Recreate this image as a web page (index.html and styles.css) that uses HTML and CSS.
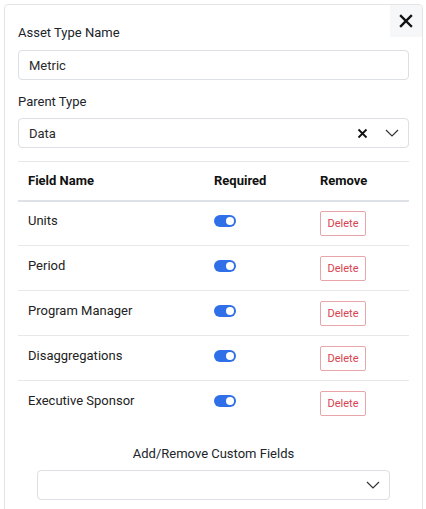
FILE: index.html
```html
<!DOCTYPE html>
<html>
<head>
<meta charset="utf-8">
<link rel="stylesheet" href="styles.css">
</head>
<body>
<div class="card">
  <button class="close" aria-label="Close">
    <svg width="14" height="14" viewBox="0 0 14 14"><path d="M2 2L12 12M12 2L2 12" stroke="#111" stroke-width="2.4" stroke-linecap="square"/></svg>
  </button>
  <div class="field">
    <label class="label">Asset Type Name</label>
    <div class="input">Metric</div>
  </div>
  <div class="field">
    <label class="label">Parent Type</label>
    <div class="input select">
      <span class="value">Data</span>
      <svg class="clear" width="11" height="11" viewBox="0 0 11 11"><path d="M1.5 1.5L9.5 9.5M9.5 1.5L1.5 9.5" stroke="#111" stroke-width="1.8"/></svg>
      <svg class="chev" width="14" height="8" viewBox="0 0 14 8"><path d="M1 1L7 7L13 1" fill="none" stroke="#333" stroke-width="1.2"/></svg>
    </div>
  </div>
  <table class="fields">
    <thead>
      <tr><th>Field Name</th><th>Required</th><th>Remove</th></tr>
    </thead>
    <tbody>
      <tr><td>Units</td><td><span class="toggle"></span></td><td><button class="del">Delete</button></td></tr>
      <tr><td>Period</td><td><span class="toggle"></span></td><td><button class="del">Delete</button></td></tr>
      <tr><td>Program Manager</td><td><span class="toggle"></span></td><td><button class="del">Delete</button></td></tr>
      <tr><td>Disaggregations</td><td><span class="toggle"></span></td><td><button class="del">Delete</button></td></tr>
      <tr><td>Executive Sponsor</td><td><span class="toggle"></span></td><td><button class="del">Delete</button></td></tr>
    </tbody>
  </table>
  <div class="custom">
    <div class="custom-label">Add/Remove Custom Fields</div>
    <div class="input select custom-select">
      <span class="value"></span>
      <svg class="chev" width="14" height="8" viewBox="0 0 14 8"><path d="M1 1L7 7L13 1" fill="none" stroke="#333" stroke-width="1.2"/></svg>
    </div>
  </div>
</div>
</body>
</html>
```
FILE: styles.css
```css
* { box-sizing: border-box; }
html, body { margin: 0; padding: 0; background: #fff; }
body {
  font-family: Roboto, "Liberation Sans", Arial, sans-serif;
  font-size: 13px;
  color: #212529;
}
.card {
  position: relative;
  margin: 4px 3px 0 4px;
  border: 1px solid #e4e4e4;
  border-radius: 4px;
  padding: 18px 13px 20px 13px;
  min-height: 520px;
}
.close {
  position: absolute;
  top: 0;
  right: 0;
  width: 32px;
  height: 32px;
  border: 0;
  background: #f6f7f8;
  display: flex;
  align-items: center;
  justify-content: center;
  padding: 0;
  border-top-right-radius: 4px;
}
.field { display: flex; flex-direction: column; }
.field + .field { margin-top: 12px; }
.label {
  line-height: 20px;
  margin-bottom: 7px;
  color: #212529;
}
.field + .field .label { margin-bottom: 6px; }
.input {
  height: 30px;
  border: 1px solid #dcdfe3;
  border-radius: 4px;
  padding: 0 10px;
  display: flex;
  align-items: center;
  color: #2a2a2a;
}
.select .value { flex: 1; }
.select .clear { margin-right: 17px; }
.select .chev { margin-right: -1px; }
.fields {
  width: 100%;
  border-collapse: collapse;
  margin-top: 13px;
  table-layout: fixed;
  border-top: 1px solid #e6e8ea;
}
.fields th:nth-child(1) { width: 186px; }
.fields th:nth-child(2) { width: 106px; }
.fields th {
  text-align: left;
  font-weight: 700;
  height: 39px;
  padding: 0 10px;
  border-bottom: 2px solid #dee2e6;
  color: #111;
}
.fields td {
  height: 45px;
  padding: 0 10px;
  border-bottom: 1px solid #e6e8ea;
  color: #222;
  vertical-align: middle;
}
.fields tbody tr:last-child td { border-bottom: 0; }
.fields td:first-child { padding-bottom: 5px; }
.toggle {
  display: inline-block;
  position: relative;
  width: 22px;
  height: 12px;
  border-radius: 6px;
  background: #2f6fe8;
  vertical-align: middle;
  margin-top: -6px;
}
.toggle::after {
  content: "";
  position: absolute;
  right: 2px;
  top: 2px;
  width: 8px;
  height: 8px;
  border-radius: 50%;
  background: #fff;
}
.del {
  font-family: inherit;
  font-size: 11px;
  color: #d9434f;
  background: #fff;
  border: 1px solid #e8a6ab;
  border-radius: 2px;
  height: 25px;
  width: 46px;
  padding: 0;
  margin-top: 1px;
}
.custom {
  display: flex;
  flex-direction: column;
  align-items: center;
  margin-top: 18px;
}
.custom-label {
  line-height: 20px;
  margin-bottom: 6px;
}
.custom-select {
  width: 353px;
}
.custom-select .value { flex: 1; }
```
